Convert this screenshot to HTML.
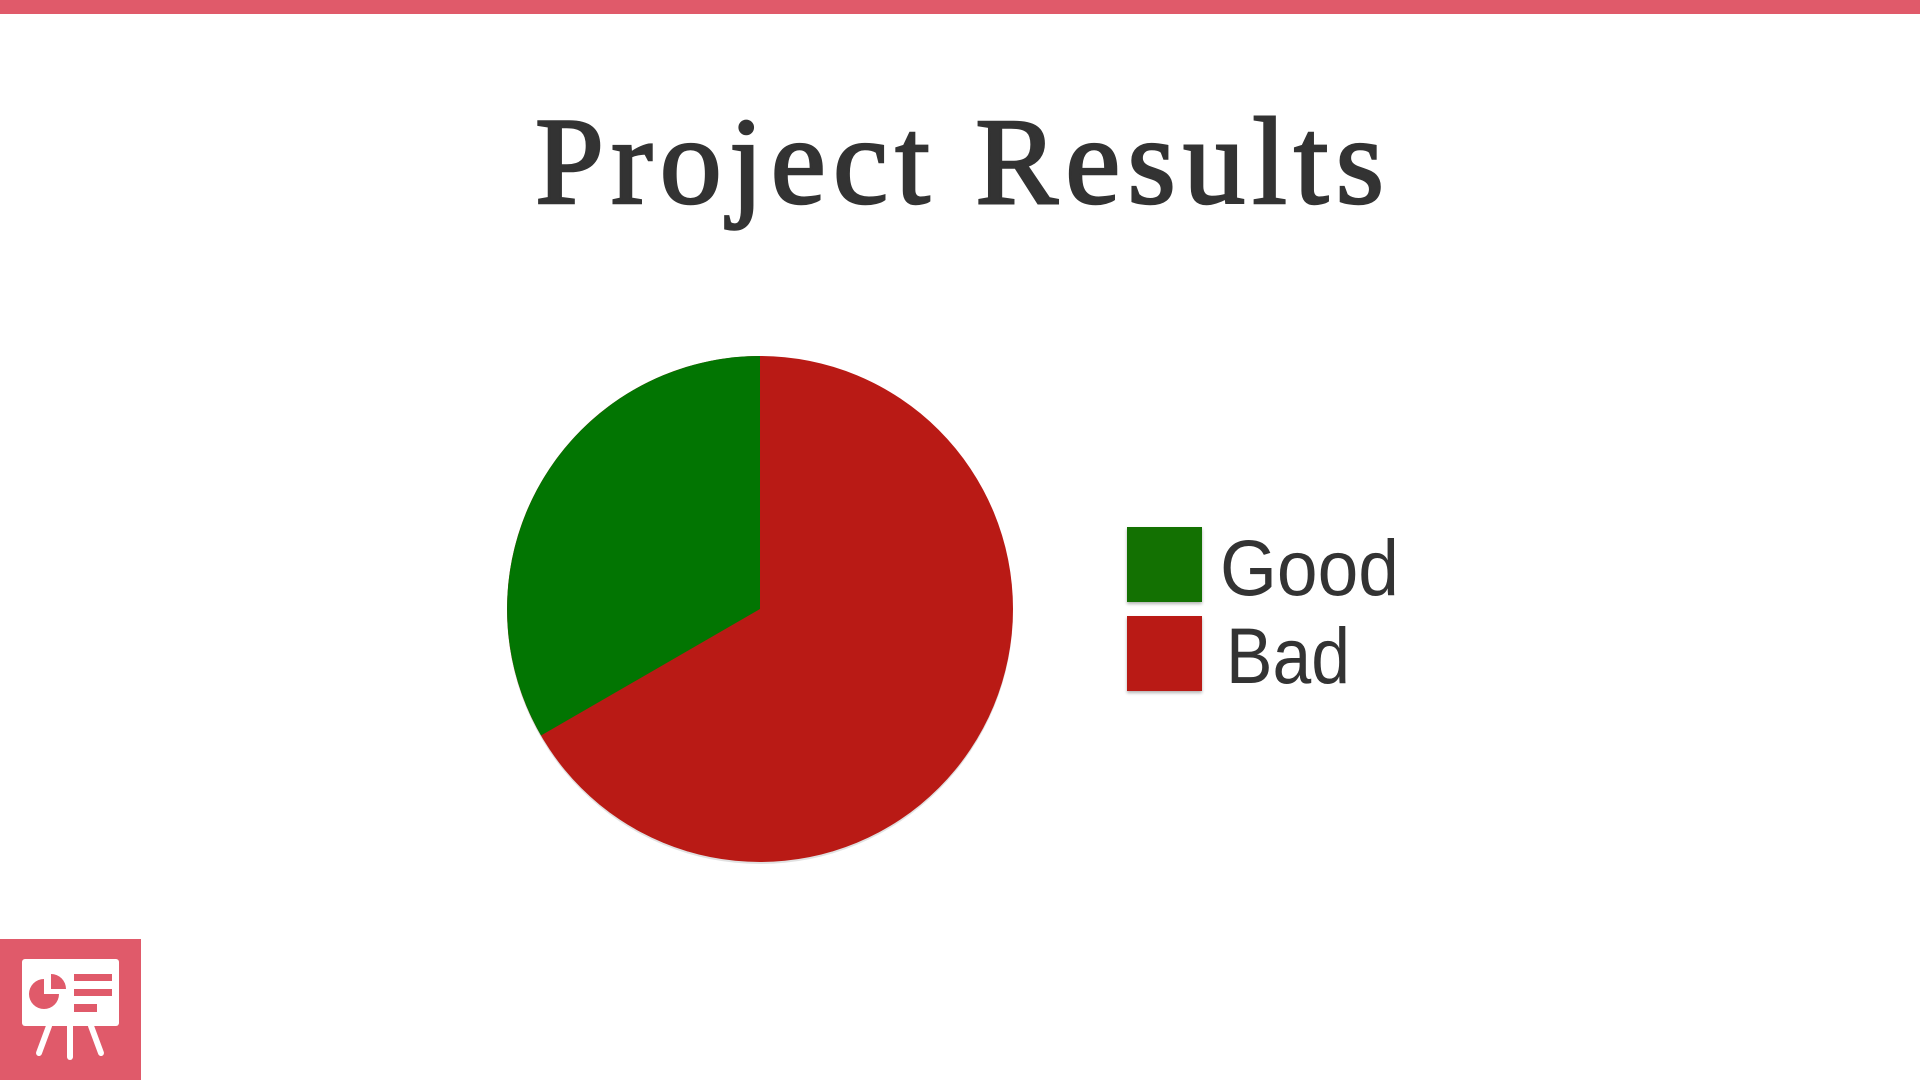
<!DOCTYPE html>
<html><head><meta charset="utf-8"><style>
html,body{margin:0;padding:0;width:1920px;height:1080px;background:#fff;overflow:hidden;position:relative}
.bar{position:absolute;left:0;top:0;width:1920px;height:14px;background:#e05a6a}
.sq{position:absolute;width:75px;height:75px;box-shadow:0 2px 3px rgba(0,0,0,.3)}
</style></head><body>
<div class="bar"></div>
<svg width="1920" height="1080" style="position:absolute;left:0;top:0">
<text x="535" y="203" textLength="849" lengthAdjust="spacing" font-family="Liberation Serif,serif" font-size="124" fill="#333" stroke="#333" stroke-width="2.5">Project Results</text>
<circle cx="760" cy="611" r="253" fill="#aaa" opacity=".35"/>
<circle cx="760" cy="609" r="253" fill="#b91a15"/>
<path d="M760,609 L760,356 A253,253 0 0 0 541,735.5 Z" fill="#027502"/>
<text x="1220" y="595" textLength="179" lengthAdjust="spacingAndGlyphs" font-family="Liberation Sans,sans-serif" font-size="79" fill="#333">Good</text>
<text x="1226" y="683" textLength="124" lengthAdjust="spacingAndGlyphs" font-family="Liberation Sans,sans-serif" font-size="79" fill="#333">Bad</text>
<rect x="0" y="939" width="141" height="141" fill="#e05a6a"/>
<rect x="22" y="959" width="97" height="67" rx="3" fill="#fff"/>
<path d="M44,994 L44,979 A15,15 0 1 0 59,994 Z" fill="#e05a6a"/>
<path d="M51,989 L51,974 A15,15 0 0 1 66,989 Z" fill="#e05a6a"/>
<rect x="74" y="974" width="38" height="7" fill="#e05a6a"/>
<rect x="74" y="989" width="38" height="7" fill="#e05a6a"/>
<rect x="74" y="1004" width="23" height="8" fill="#e05a6a"/>
<g stroke="#fff" stroke-width="6" stroke-linecap="round">
<line x1="49" y1="1026" x2="39" y2="1053"/>
<line x1="70" y1="1026" x2="70" y2="1057"/>
<line x1="91" y1="1026" x2="101" y2="1053"/>
</g>
</svg>
<div class="sq" style="left:1127px;top:527px;background:#137102"></div>
<div class="sq" style="left:1127px;top:616px;background:#b91a15"></div>
</body></html>
